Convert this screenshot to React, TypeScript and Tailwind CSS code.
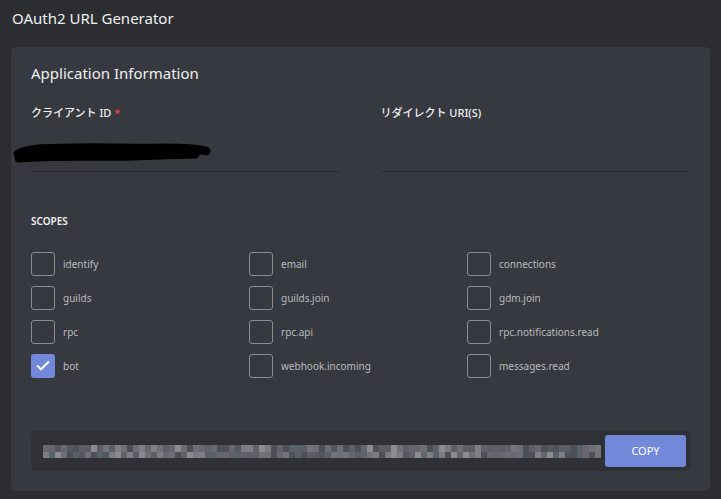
import { Check } from "lucide-react";

const scopes = [
  ["identify", "email", "connections"],
  ["guilds", "guilds.join", "gdm.join"],
  ["rpc", "rpc.api", "rpc.notifications.read"],
  ["bot", "webhook.incoming", "messages.read"],
];

const checked = new Set(["bot"]);

// pixelated url blocks (the original is mosaic-censored)
const mosaicColors = [
  "#5d5f66", "#6e6f76", "#55575e", "#7a7c82", "#4d4f56", "#66676e", "#8a8c90",
  "#5a5c66", "#72747a", "#60626a", "#6a6570", "#4f5158", "#7d7f85", "#58606a",
];

function mosaicRow(seed: number) {
  const cells: string[] = [];
  let s = seed;
  for (let i = 0; i < 93; i++) {
    s = (s * 9301 + 49297) % 233280;
    cells.push(mosaicColors[s % mosaicColors.length]);
  }
  return cells;
}

function Checkbox({ on }: { on: boolean }) {
  return on ? (
    <span className="grid h-6 w-6 shrink-0 place-items-center rounded-[3px] bg-[#7289da]">
      <Check className="h-4 w-4 text-white" strokeWidth={3} />
    </span>
  ) : (
    <span className="h-6 w-6 shrink-0 rounded-[3px] border border-[#8a8d92]" />
  );
}

export default function App() {
  const rowA = mosaicRow(7);
  const rowB = mosaicRow(13);

  return (
    <div
      className="h-[499px] w-full overflow-hidden bg-[#2b2d31] text-[#dcddde]"
      style={{ fontFamily: '"Noto Sans", "Noto Sans CJK JP", sans-serif' }}
    >
      <h1 className="px-3 pt-[7px] text-[15px] leading-[22px] text-[#f0f0f0]">OAuth2 URL Generator</h1>

      <div className="mx-[11px] mt-[18px] rounded-[5px] bg-[#36393f] px-5 pb-5 pt-[16px]">
        <h2 className="text-[15px] leading-[20px] text-[#f0f0f0]">Application Information</h2>

        <div className="mt-[22px] grid grid-cols-2 gap-10">
          <div>
            <div className="text-[11px] font-medium leading-4 text-[#f0f0f0]">
              クライアント ID <span className="text-[#f04747]">*</span>
            </div>
            <div className="relative h-[51px] border-b border-[#2c2e33]">
              {/* censored value */}
              <svg className="absolute -left-[18px] top-[19px]" width="200" height="26" viewBox="0 0 200 26">
                <path
                  d="M5 14 C20 7 40 9 60 8 C90 7 120 9 150 8 C170 8 185 9 193 11 M6 18 C40 15 80 17 120 16 C150 15 170 14 182 14 M30 12 L160 12"
                  stroke="#000"
                  strokeWidth="9"
                  strokeLinecap="round"
                  fill="none"
                />
              </svg>
            </div>
          </div>
          <div>
            <div className="text-[11px] font-medium leading-4 text-[#f0f0f0]">リダイレクト URI(S)</div>
            <div className="h-[51px] border-b border-[#2c2e33]" />
          </div>
        </div>

        <div className="mt-[41px] text-[10px] font-semibold uppercase leading-4 text-[#f0f0f0]">Scopes</div>

        <div className="mt-[23px] grid grid-cols-[218px_218px_1fr] gap-y-[10px]">
          {scopes.flat().map((s) => (
            <label key={s} className="flex items-center gap-2">
              <Checkbox on={checked.has(s)} />
              <span className="text-[10px] leading-4 text-[#b9bbbe]">{s}</span>
            </label>
          ))}
        </div>

        <div className="mt-[53px] flex items-center rounded-[5px] bg-[#2f3136] py-1 pl-3 pr-1">
          <div className="flex flex-1 flex-col overflow-hidden pr-1.5">
            <div className="flex h-[7px]">
              {rowA.map((c, i) => (
                <span key={i} className="h-full w-[6px] shrink-0" style={{ backgroundColor: c }} />
              ))}
            </div>
            <div className="flex h-[6px]">
              {rowB.map((c, i) => (
                <span key={i} className="h-full w-[6px] shrink-0" style={{ backgroundColor: c }} />
              ))}
            </div>
          </div>
          <button className="h-8 w-[81px] shrink-0 rounded-[3px] bg-[#7289da] text-[11px] text-white">COPY</button>
        </div>
      </div>
    </div>
  );
}
